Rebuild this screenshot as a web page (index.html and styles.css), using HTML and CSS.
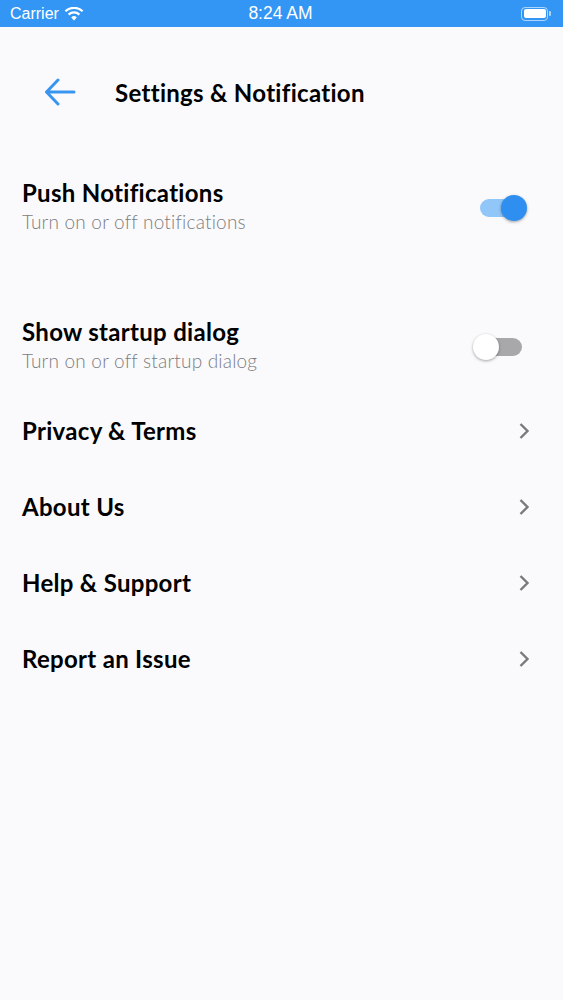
FILE: index.html
```html
<!DOCTYPE html>
<html lang="en">
<head>
    <meta charset="UTF-8">
    <meta name="viewport" content="width=device-width, initial-scale=1.0">
    <title>Settings &amp; Notification</title>
    <link rel="stylesheet" href="styles.css">
</head>
<body>
    <!-- Barra de estado -->
    <div class="status-bar">
        <div class="status-left">
            <span>Carrier</span>
            <svg class="wifi" width="20" height="14" viewBox="0 0 20 14">
                <path d="M10 13.5 L7.2 10.4 A4 4 0 0 1 12.8 10.4 Z" fill="#fff"/>
                <path d="M4.6 7.6 A7.8 7.8 0 0 1 15.4 7.6" stroke="#fff" stroke-width="2.2" fill="none"/>
                <path d="M1.4 4.3 A12.4 12.4 0 0 1 18.6 4.3" stroke="#fff" stroke-width="2.2" fill="none"/>
            </svg>
        </div>
        <span class="status-time">8:24 AM</span>
        <div class="status-right">
            <div class="battery"><div class="battery-level"></div></div>
            <div class="battery-cap"></div>
        </div>
    </div>

    <div class="header">
        <svg class="back" width="32" height="28" viewBox="0 0 32 28">
            <path d="M30 14 H3 M14 2 L2.5 14 L14 26" stroke="#3a95f0" stroke-width="3" fill="none" stroke-linecap="round" stroke-linejoin="round"/>
        </svg>
        <h1>Settings &amp; Notification</h1>
    </div>

    <div class="settings">
        <div class="toggle-row first">
            <div class="row-text">
                <div class="row-title">Push Notifications</div>
                <div class="row-sub">Turn on or off notifications</div>
            </div>
            <div class="switch on"><div class="knob"></div></div>
        </div>

        <div class="toggle-row second">
            <div class="row-text">
                <div class="row-title">Show startup dialog</div>
                <div class="row-sub">Turn on or off startup dialog</div>
            </div>
            <div class="switch"><div class="knob"></div></div>
        </div>

        <div class="links">
            <div class="link-row">
                <span class="row-title">Privacy &amp; Terms</span>
                <svg class="chevron" width="12" height="18" viewBox="0 0 12 18"><path d="M2.5 2 L9.5 9 L2.5 16" stroke="#7a7a7e" stroke-width="2.4" fill="none"/></svg>
            </div>
            <div class="link-row">
                <span class="row-title">About Us</span>
                <svg class="chevron" width="12" height="18" viewBox="0 0 12 18"><path d="M2.5 2 L9.5 9 L2.5 16" stroke="#7a7a7e" stroke-width="2.4" fill="none"/></svg>
            </div>
            <div class="link-row">
                <span class="row-title">Help &amp; Support</span>
                <svg class="chevron" width="12" height="18" viewBox="0 0 12 18"><path d="M2.5 2 L9.5 9 L2.5 16" stroke="#7a7a7e" stroke-width="2.4" fill="none"/></svg>
            </div>
            <div class="link-row">
                <span class="row-title">Report an Issue</span>
                <svg class="chevron" width="12" height="18" viewBox="0 0 12 18"><path d="M2.5 2 L9.5 9 L2.5 16" stroke="#7a7a7e" stroke-width="2.4" fill="none"/></svg>
            </div>
        </div>
    </div>
</body>
</html>
```

FILE: styles.css
```css
/* Estilos generales */
* {
    margin: 0;
    padding: 0;
    box-sizing: border-box;
}

body {
    font-family: 'Lato', 'Open Sans', sans-serif;
    background-color: #fafafc;
    color: #000;
    height: 1000px;
    overflow: hidden;
}

.status-bar {
    height: 27px;
    background-color: #3396f4;
    color: #fff;
    display: flex;
    align-items: center;
    justify-content: space-between;
    padding: 0 12px 0 10px;
    font-family: 'Liberation Sans', sans-serif;
    font-size: 16px;
}

.status-left {
    display: flex;
    align-items: center;
    gap: 5px;
    width: 120px;
}

.status-time {
    font-size: 17.5px;
}

.status-right {
    display: flex;
    align-items: center;
    justify-content: flex-end;
    width: 120px;
}

.battery {
    width: 27px;
    height: 14px;
    border: 1.5px solid rgba(255, 255, 255, 0.6);
    border-radius: 4px;
    padding: 1.5px;
}

.battery-level {
    width: 100%;
    height: 100%;
    background-color: #fff;
    border-radius: 2px;
}

.battery-cap {
    width: 2px;
    height: 5px;
    margin-left: 1px;
    background-color: rgba(255, 255, 255, 0.6);
    border-radius: 0 1px 1px 0;
}

.header {
    display: flex;
    align-items: center;
    height: 40px;
    margin-top: 45px;
    padding-left: 44px;
}

.back {
    margin-right: 39px;
}

h1 {
    font-size: 24px;
    font-weight: 700;
    letter-spacing: 0.3px;
}

.settings {
    padding: 0 22px;
}

.toggle-row {
    display: flex;
    align-items: center;
    justify-content: space-between;
}

.toggle-row.first {
    margin-top: 67px;
}

.toggle-row.second {
    margin-top: 81px;
}

.row-title {
    font-size: 24px;
    font-weight: 700;
    line-height: 28px;
    letter-spacing: 0.3px;
}

.row-sub {
    font-size: 19px;
    font-weight: 300;
    line-height: 30px;
    color: #7c7c80;
    letter-spacing: 0.2px;
}

.switch {
    position: relative;
    width: 42px;
    height: 18px;
    border-radius: 9px;
    background-color: #a8a8aa;
    margin-right: 19px;
}

.switch.on {
    background-color: #90c6f8;
}

.knob {
    position: absolute;
    top: -4px;
    left: -7px;
    width: 26px;
    height: 26px;
    border-radius: 50%;
    background-color: #fff;
    box-shadow: 0 1px 3px rgba(0, 0, 0, 0.35);
}

.switch.on .knob {
    left: auto;
    right: -5px;
    background-color: #2e8ff0;
}

.links {
    margin-top: 17px;
}

.link-row {
    height: 76px;
    display: flex;
    align-items: center;
    justify-content: space-between;
    padding-right: 11px;
}
```
